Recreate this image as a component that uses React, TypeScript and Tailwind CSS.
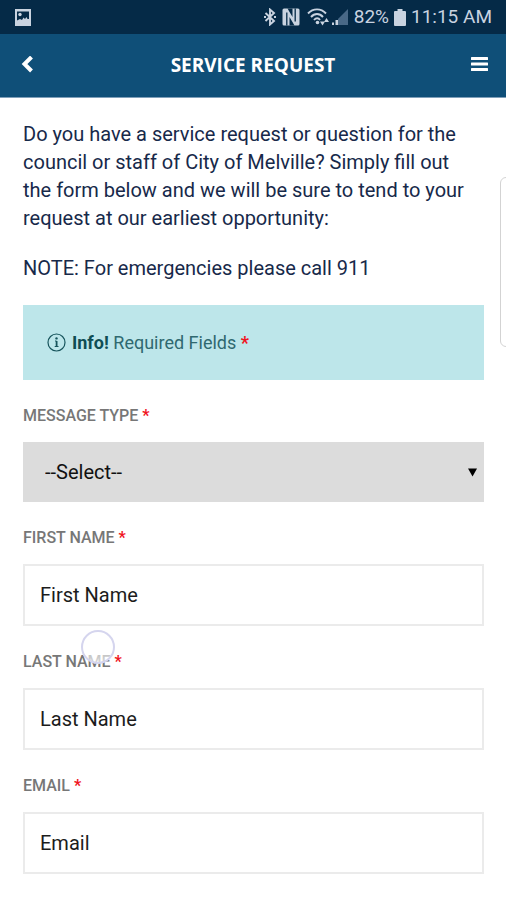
import type { ReactNode } from 'react';

const textFields = [
    { id: 'firstName', label: 'First Name', type: 'text' },
    { id: 'lastName', label: 'Last Name', type: 'text' },
    { id: 'email', label: 'Email', type: 'email' },
];

function StatusBar() {
    return (
        <div className="flex h-[34px] items-center justify-between bg-[#052a47] px-3.5 text-[#c9d3e0]">
            <svg width="18" height="17" viewBox="0 0 18 17">
                <path fill="currentColor" fillRule="evenodd" d="M1 0h16v17H1zM3 2.500v9l3-1.500 2 1 1.500-2.500 1.500 1.500 1.500-2 1 2H15V2.500z" />
                <circle cx="6" cy="5.500" r="1.700" fill="currentColor" />
            </svg>
            <div className="flex items-center">
                {/* Bluetooth */}
                <svg width="12" height="18" viewBox="0 0 12 18" fill="none" stroke="currentColor" strokeWidth="1.900">
                    <path d="M1.500 5l8.500 8-4 3.500v-15L10 5l-8.500 8" />
                    <path d="M0 9h2M10 9h2" />
                </svg>
                {/* NFC */}
                <svg className="ml-1.5" width="18" height="18" viewBox="0 0 18 18">
                    <rect x="0.500" y="0.500" width="17" height="17" rx="1.500" fill="currentColor" />
                    <path d="M4.800 17.500V4.500M13.200 .5v13" stroke="#052a47" strokeWidth="1.300" />
                    <path d="M7.500 17.500V9l5 8.500zM10.500 .5V9l-5-8.500z" fill="#052a47" />
                </svg>
                {/* Wi-Fi */}
                <svg className="ml-[7px]" width="24" height="18" viewBox="0 0 24 18" fill="none" stroke="currentColor" strokeWidth="1.900">
                    <path d="M1 5.500C6 0 14 0 19 5.500M4 9c3.500-4 8.500-4 12 0M7 12c2-2.300 4.500-2.300 6 0" />
                    <circle cx="10.500" cy="14.500" r="1.800" fill="currentColor" stroke="none" />
                    <path fill="currentColor" stroke="none" d="M13 13.500h5L15.500 17.500zM17 14l2.500-4 2.500 4z" />
                </svg>
                {/* Signal */}
                <svg width="18" height="18" viewBox="0 0 18 18">
                    <path fill="#496987" d="M17 1v16H7V11z" />
                    <path fill="currentColor" d="M1 14.500h2V17H1zM4.500 12H7v5H4.500z" />
                </svg>
                <span className="ml-[5px] text-[19px]">82%</span>
                {/* Battery */}
                <svg className="ml-[5px]" width="12" height="17" viewBox="0 0 12 17">
                    <path fill="currentColor" d="M3.500 0h5v2H11a1 1 0 0 1 1 1v13a1 1 0 0 1-1 1H1a1 1 0 0 1-1-1V3a1 1 0 0 1 1-1h2.500z" />
                </svg>
                <span className="ml-[5px] text-[19px]">11:15 AM</span>
            </div>
        </div>
    );
}

function Header() {
    return (
        <header className="flex h-16 items-center justify-between border-b border-[#7f9fb9] bg-[#0f4f78] px-[17px] pb-px text-white">
            <button type="button" aria-label="Back" className="flex w-5 justify-center">
                <svg width="12" height="18" viewBox="0 0 12 18" fill="none" stroke="currentColor" strokeWidth="4">
                    <path d="M10.500 1L3.500 8l7 7" />
                </svg>
            </button>
            <h1 className="font-['Open_Sans',sans-serif] text-[19px] font-bold">SERVICE REQUEST</h1>
            <button type="button" aria-label="Menu" className="flex w-5 justify-center">
                <svg width="18" height="16" viewBox="0 0 18 16" fill="currentColor">
                    <rect x="1" y="0" width="17" height="3" rx=".5" />
                    <rect x="1" y="5.500" width="17" height="3" rx=".5" />
                    <rect x="1" y="11" width="17" height="3" rx=".5" />
                </svg>
            </button>
        </header>
    );
}

function Field({ id, label, children }: { id: string; label: string; children: ReactNode }) {
    return (
        <div className="relative flex flex-col gap-3.5">
            <label htmlFor={id} className="text-base leading-6 font-medium uppercase text-[#777]">
                {label} <span className="font-bold text-[#f0141e]">*</span>
            </label>
            {children}
        </div>
    );
}

export default function App() {
    return (
        <div className="relative min-h-screen overflow-hidden bg-white font-[Roboto,sans-serif]">
            <StatusBar />
            <Header />
            <main className="pt-[22px] pr-[22px] pb-[26px] pl-[23px]">
                <div className="space-y-[22px] pr-2.5 text-xl leading-7 text-[#17294a]">
                    <p>
                        Do you have a service request or question for the council or staff of City of Melville? Simply fill out
                        the form below and we will be sure to tend to your request at our earliest opportunity:
                    </p>
                    <p>NOTE: For emergencies please call 911</p>
                </div>

                <div className="mt-[23px] flex h-[75px] items-center gap-1.5 bg-[#bde6ea] px-6 text-lg text-[#2f6970]">
                    <svg width="19" height="19" viewBox="0 0 19 19" fill="none" stroke="#17545c">
                        <circle cx="9.500" cy="9.500" r="8.500" strokeWidth="1.200" />
                        <path strokeWidth="1.800" d="M9.600 8v5.500" />
                        <path strokeWidth="1" d="M8 8h1.500M7.700 13.500h3.800" />
                        <circle cx="9.500" cy="5.400" r="1.200" fill="#17545c" stroke="none" />
                    </svg>
                    <p>
                        <strong className="font-bold text-[#0f4d54]">Info!</strong> Required Fields{' '}
                        <span className="font-bold text-[#f0141e]">*</span>
                    </p>
                </div>

                <form className="mt-6 flex flex-col gap-6">
                    <Field id="messageType" label="Message Type">
                        <div className="grid items-center">
                            <select
                                id="messageType"
                                className="col-start-1 row-start-1 h-[60px] w-full appearance-none bg-[#dcdcdc] px-[22px] text-xl text-[#111]"
                            >
                                <option>--Select--</option>
                            </select>
                            <svg
                                className="pointer-events-none col-start-1 row-start-1 mr-[7px] justify-self-end"
                                width="9"
                                height="9"
                                viewBox="0 0 9 9"
                            >
                                <path d="M0 .5h9L4.500 8.500z" />
                            </svg>
                        </div>
                    </Field>

                    {textFields.map((field) => (
                        <Field key={field.id} id={field.id} label={field.label}>
                            <input
                                id={field.id}
                                type={field.type}
                                placeholder={field.label}
                                className="h-[62px] w-full border-2 border-[#ebebeb] bg-white px-[15px] text-xl text-[#111] placeholder:text-[#1c1c1c]"
                            />
                            {/* Touch indicator */}
                            {field.id === 'lastName' && (
                                <span className="pointer-events-none absolute -top-5 left-[58px] size-[34px] rounded-full border-2 border-[#d5d5ee] bg-linear-to-b from-white/20 to-white/70" />
                            )}
                        </Field>
                    ))}
                </form>
            </main>

            {/* Edge panel handle */}
            <div className="absolute top-[177px] -right-1.5 h-[170px] w-3 rounded-md border border-[#d3d3d3] bg-white" />
        </div>
    );
}
